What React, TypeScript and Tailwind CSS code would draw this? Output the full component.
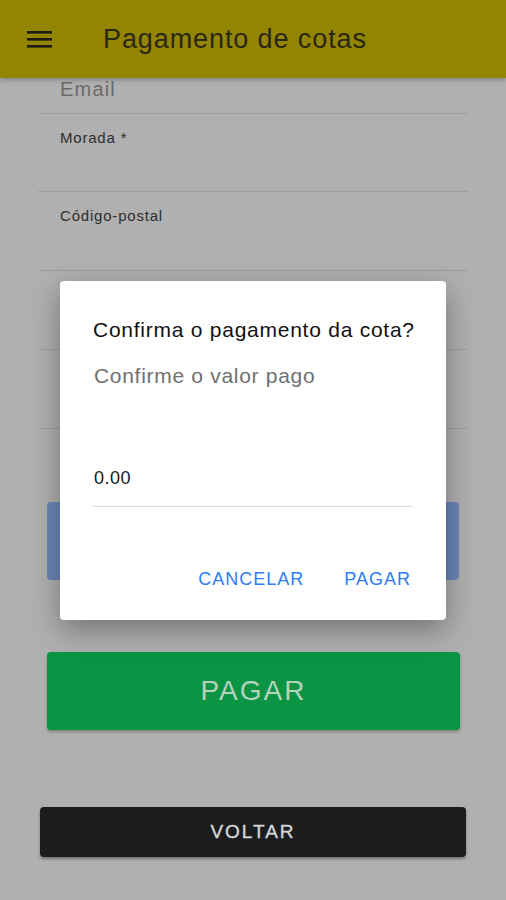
function Field({ label, h = 78 }: { label?: string; h?: number }) {
  return (
    <div className="border-b border-[#9e9e9e] pt-[15px]" style={{ height: h }}>
      {label && (
        <div className="pl-[22px] text-[15px] leading-[18px] tracking-[0.8px] text-[#2e2e2e]">{label}</div>
      )}
    </div>
  );
}

export default function App() {
  return (
    <div className="relative h-[900px] w-[506px] overflow-hidden bg-[#b0b0b0] font-['Liberation_Sans',Arial,sans-serif]">
      <header className="relative z-10 flex h-[78px] items-center bg-[#938500] shadow-[0_2px_4px_rgba(0,0,0,0.25)]">
        <svg className="ml-[27px]" width="26" height="17" viewBox="0 0 26 17" fill="#1c1c14">
          <rect x="0" y="0" width="25" height="2.6" />
          <rect x="0" y="7" width="25" height="2.6" />
          <rect x="0" y="14" width="25" height="2.6" />
        </svg>
        <h1 className="ml-[50px] text-[27px] leading-[30px] tracking-[0.9px] text-[#2a2818]">Pagamento de cotas</h1>
      </header>

      <div className="mx-[38px]">
        <div className="h-[36px] border-b border-[#9e9e9e] pl-[22px] text-[20px] leading-[22px] tracking-[1.2px] text-[#6a6a6a]">
          Email
        </div>
        <Field label="Morada *" />
        <Field label="Código-postal" h={79} />
        <Field h={79} />
        <Field h={79} />
      </div>

      <div className="mx-[47px] mt-[73px] h-[78px] rounded-[4px] bg-[#6b86b8]" />

      <button className="mx-[47px] mt-[72px] flex h-[78px] w-[413px] items-center justify-center rounded-[4px] bg-[#0b9444] text-[28px] tracking-[2px] text-[#b3d3bd] shadow-[0_2px_3px_rgba(0,0,0,0.25)]">
        PAGAR
      </button>

      <button className="mx-[40px] mt-[77px] flex h-[50px] w-[426px] items-center justify-center rounded-[4px] bg-[#1b1c1e] text-[19px] tracking-[2px] text-[#d4d4d4] shadow-[0_2px_3px_rgba(0,0,0,0.35)] [-webkit-text-stroke:0.4px_#d4d4d4]">
        VOLTAR
      </button>

      <div className="absolute left-[60px] top-[281px] z-20 flex h-[339px] w-[386px] flex-col rounded-[4px] bg-white px-[33px] shadow-[0_10px_30px_rgba(0,0,0,0.35)]">
        <div className="mt-[37px] whitespace-nowrap text-[21px] leading-[24px] tracking-[0.75px] text-[#111]">
          Confirma o pagamento da cota?
        </div>
        <div className="mt-[22px] pl-[1px] text-[21px] leading-[24px] tracking-[0.7px] text-[#707070]">Confirme o valor pago</div>
        <div className="mt-[79px] border-b border-[#dcdcdc] pb-[17px] pl-[1px] text-[18px] leading-[22px] tracking-[0.5px] text-[#1a1a1a]">0.00</div>
        <div className="mt-[61px] flex justify-end gap-[40px] pr-[2px] text-[18px] leading-[22px] tracking-[1px] text-[#2f7cf6]">
          <span>CANCELAR</span>
          <span>PAGAR</span>
        </div>
      </div>
    </div>
  );
}
